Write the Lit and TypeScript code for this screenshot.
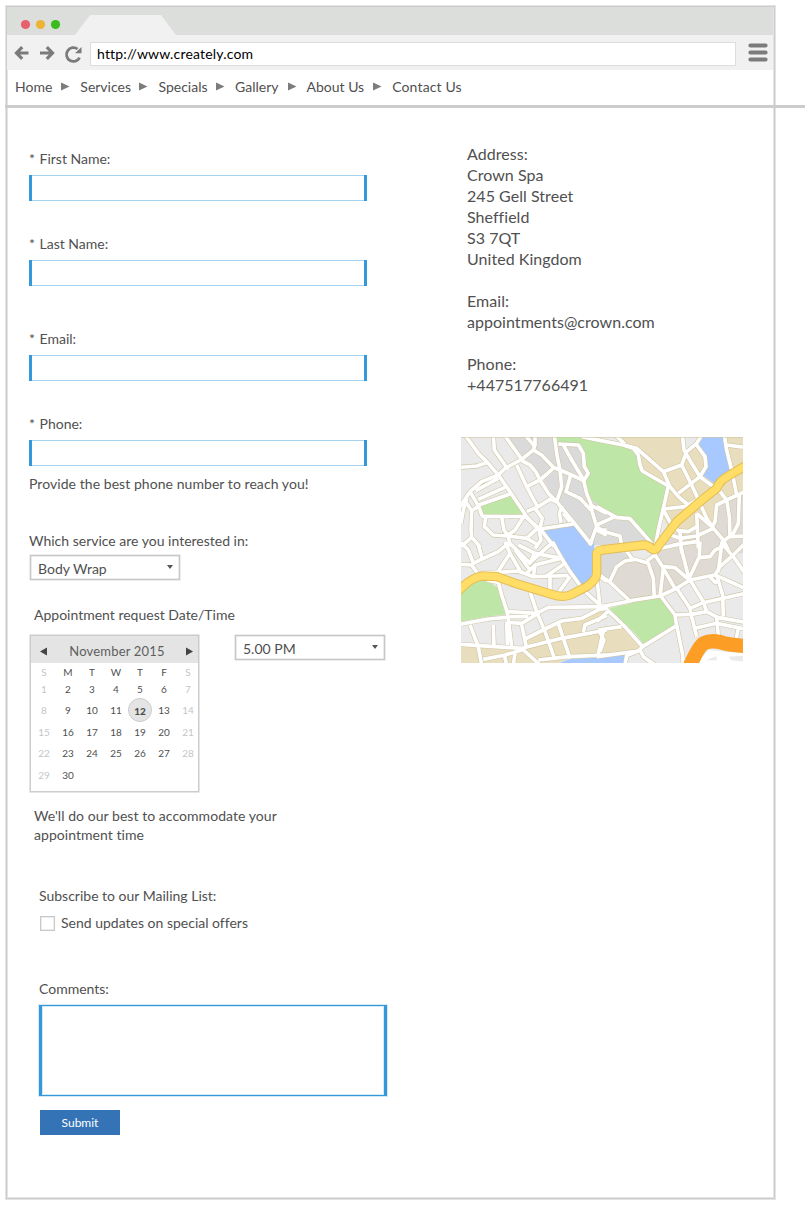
import { LitElement, html, svg, css } from "lit";
import { customElement } from "lit/decorators.js";

interface Tile { dx: number; dy: number; areas: [string, string][]; roads: string[]; }

const LIGHT = "#eaeaea", GREY = "#dadada", STONE = "#dfdad3", SAND = "#e8ddbd", PARK = "#bde6a7", WATER = "#a7c9ff";

/* The city map is split in four tiles, each with its own local coordinates. */
const tiles: Tile[] = [
  {
    dx: 0, dy: 0,
    areas: [
      [GREY, "145,21 305,21 315,40 450,60 450,345 400,345 345,270 305,215 265,150 215,90 155,30"],
      [SAND, "385,10 450,10 450,32"],
      [PARK, "303,21 310,36 375,40 390,60 392,115 403,132 386,155 405,205 450,238 450,35 390,21"],
      [PARK, "72,222 165,194 212,259 85,259"],
      [WATER, "263,300 358,285 412,345 415,348 296,348"],
    ],
    roads: [
      "30,15 70,70 100,100 130,135 165,185 215,260 250,300", "15,112 65,108 98,97",
      "115,15 118,60 150,105 160,118", "148,15 200,88 235,60 240,45 240,15", "235,60 260,75 295,112 315,120",
      "210,15 240,50", "315,120 305,70 298,15", "200,88 150,115 130,135 80,155 45,185 15,230",
      "200,92 225,105 242,125 258,155 280,190 305,215 350,270 410,345", "185,105 215,170 250,235", "215,170 255,150 295,115",
      "305,215 320,170 315,120", "310,42 370,45 385,70 388,110 400,130 386,152 350,135 315,120", "325,45 350,90 386,150",
      "386,152 395,190 407,220 410,240 425,290 440,300 455,300", "347,135 333,185 375,205 407,240", "407,225 435,240 455,250",
      "215,245 250,230 285,208 305,215", "45,185 69,226 165,192", "70,226 82,259", "62,182 130,145", "70,208 150,172",
      "80,259 210,260 255,297 355,282", "92,262 88,290 115,315 155,318 180,300 205,262", "140,262 147,300 160,318 165,350",
      "50,240 48,300 50,322 75,350", "50,322 18,350", "18,280 25,240 35,205", "68,230 50,242 32,215",
      "255,295 262,265 240,235", "318,278 313,250 322,228", "345,275 325,250", "160,318 215,325 250,345",
      "215,325 250,292", "252,300 258,330 240,355", "258,300 297,350", "425,290 412,325 405,345", "425,300 455,315",
    ],
  },
  {
    dx: 435, dy: 0,
    areas: [
      [SAND, "50,15 435,15 435,180 350,220 345,290 290,300 210,305 180,240 205,170 125,125 115,60 70,40"],
      [GREY, "-10,230 45,255 100,270 155,345 -10,345"],
      [STONE, "345,225 435,180 435,370 190,360 200,310 290,305 295,255 340,285"],
      [LIGHT, "250,15 300,15 288,45 255,60"],
      [LIGHT, "10,15 45,15 60,38 0,28"],
      [PARK, "-5,35 70,48 100,60 120,90 125,125 205,170 185,240 170,300 165,352 100,275 45,262 -5,230"],
      [WATER, "300,15 375,15 378,60 395,115 345,162 308,135 320,90 293,45"],
    ],
    roads: [
      "-55,20 0,31 70,45 110,55 190,125 210,170 235,200 265,225", "45,15 75,42", "70,45 100,55 115,75 120,105 127,123 205,168",
      "190,125 245,105 260,65 290,40 305,15", "245,105 275,165 300,220 320,265 340,295 370,330 385,360",
      "247,15 252,60 275,100 300,140 360,185 380,210 435,185", "290,45 315,80 318,110 300,140 235,190",
      "373,15 380,60 395,120 410,195", "380,45 435,52", "205,168 190,235 175,300 166,350", "190,237 255,230 290,210",
      "190,240 215,285 235,302 265,305 290,290", "380,210 388,260 390,320 435,318", "380,210 350,225 345,275 335,292",
      "418,190 415,280 400,310 375,330", "290,250 295,355", "290,250 335,290", "240,305 245,370",
      "195,308 240,325 290,318 340,295", "220,345 290,335", "370,325 360,360", "-10,230 45,260 -10,285",
      "45,262 90,266 120,300 155,340", "-5,300 60,318 65,345",
    ],
  },
  {
    dx: 0, dy: 345,
    areas: [
      [SAND, "15,303 200,310 215,285 270,260 320,235 380,225 430,190 455,187 455,340 340,340 310,356 15,356"],
      [LIGHT, "385,268 392,240 455,212 455,250"],
      [PARK, "15,145 65,110 95,105 130,130 150,208 95,215 15,230"],
      [WATER, "292,-5 418,-5 412,85 412,105 385,137"],
      [WATER, "310,356 340,343 455,335 455,356"],
    ],
    roads: [
      "15,58 50,60 68,85", "20,-5 40,15 55,55 75,45 130,20 160,-5", "70,0 82,42", "15,5 20,-10",
      "80,82 130,82 190,78 235,95 300,93 340,92", "128,82 165,25 150,-10", "165,25 200,85", "180,15 225,75",
      "160,-10 180,10 225,55 240,20", "225,52 290,-5", "190,0 240,25 320,40", "215,85 240,60 320,40", "240,62 235,95",
      "285,95 285,140", "275,93 330,55", "320,40 292,-10", "320,40 345,80 385,135 440,185", "345,95 305,150",
      "95,105 130,112 140,150 158,205 162,240 170,305", "160,200 245,205 280,187 455,185", "225,140 245,200 270,260 300,345",
      "15,238 100,222 155,217 160,210", "410,105 430,90 455,110", "425,95 435,185", "45,240 70,305 80,360", "115,240 117,300",
      "160,232 200,235 250,205", "15,298 200,310 320,280 455,255", "200,240 215,310", "155,230 157,300",
      "200,310 255,360", "200,315 150,330 85,343", "148,330 155,360", "180,325 175,360", "210,282 270,252 320,228 380,220 445,187",
      "310,235 345,340", "250,345 340,335 455,330", "385,262 390,240 455,212", "445,258 428,335", "165,215 220,215",
    ],
  },
  {
    dx: 435, dy: 345,
    areas: [
      [GREY, "-10,25 60,18 95,40 60,55 30,100 -10,85"],
      [STONE, "35,102 55,60 100,45 150,60 165,150 90,165"],
      [STONE, "150,40 170,10 435,-10 400,35 350,88 270,105 185,150 170,150"],
      [SAND, "0,255 75,245 128,300 115,312 -10,330"],
      [SAND, "-10,185 20,190 -10,215"],
      [PARK, "28,190 180,155 225,215 223,242 132,298 110,270"],
      [WATER, "-10,340 80,325 70,356 -10,356"],
      ["#ffffff", "290,356 325,315 435,325 435,356"],
      [LIGHT, "318,346 348,334 352,346"],
      [LIGHT, "385,335 435,332 435,350 395,346"],
    ],
    roads: [
      "-5,88 30,112 90,168 -5,187", "85,168 180,153 230,130 270,105 345,90 360,65 400,30 435,-5",
      "345,90 435,130", "330,95 345,112 360,110", "30,108 50,65 75,48 105,43 145,55 160,100 163,158", "100,45 75,12", "140,48 165,30 190,68 180,155",
      "165,35 165,10", "190,65 225,68 268,105", "190,70 225,130", "240,-5 268,105", "300,-10 298,35 265,105",
      "298,38 330,35 345,15 362,8", "180,10 240,-3", "400,35 365,-5", "400,35 435,85", "355,80 365,0",
      "180,150 225,210 230,242 128,305 70,240 25,198 -10,230", "25,190 -10,193", "230,130 270,190 275,215 290,275",
      "225,210 275,208", "270,190 310,173 435,145", "270,105 310,170 320,200 355,218 435,232", "350,90 368,150 370,215",
      "275,208 320,200", "350,215 355,275", "285,250 350,235 435,252", "230,240 248,330 250,360", "128,305 115,318 -10,335",
      "115,318 80,332 75,360", "120,315 130,335 165,360", "-5,255 65,245", "0,262 12,285 0,320", "415,250 408,285",
    ],
  },
];

const YELLOW = "M0,492 L18,475 Q50,443 80,438 L125,440 190,463 290,493 Q325,505 350,493 L395,470 Q425,450 425,430 L425,372 Q426,362 440,360 L565,345 Q580,345 588,355 Q602,366 612,345 L665,275 735,215 785,175 Q795,150 820,138 L870,108";

@customElement("city-map")
class CityMap extends LitElement {
  static styles = css`
    :host { display: block; width: 282px; height: 226px; }
    svg { display: block; }
    .casing { fill: none; stroke: #cfc6a6; stroke-width: 14.5; stroke-linejoin: round; }
    .road { fill: none; stroke: #fff; stroke-width: 11; stroke-linejoin: round; }
    .main-casing { fill: none; stroke: #e2be55; stroke-width: 28; }
    .main { fill: none; stroke: #ffdd66; stroke-width: 22; }
    .motorway { fill: none; stroke: #fc9e26; stroke-width: 43; }
  `;
  private layer(cls: string) {
    return tiles.map(t => svg`<g transform="translate(${t.dx} ${t.dy})">${t.roads.map(r => svg`<polyline class=${cls} points=${r}></polyline>`)}</g>`);
  }
  render() {
    return html`<svg width="282" height="226" viewBox="18 21 846 678" preserveAspectRatio="none">
      <rect x="0" y="0" width="900" height="720" fill=${LIGHT}></rect>
      ${tiles.map(t => svg`<g transform="translate(${t.dx} ${t.dy})">${t.areas.map(a => svg`<polygon fill=${a[0]} points=${a[1]}></polygon>`)}</g>`)}
      ${this.layer("casing")}${this.layer("road")}
      <path class="main-casing" d=${YELLOW}></path><path class="main" d=${YELLOW}></path>
      <path class="motorway" d="M704,710 Q730,650 746,640 Q765,630 795,636 Q820,645 870,648"></path>
      <rect x="18" y="21" width="846" height="2.5" fill="#cdc4a2" opacity="0.7"></rect>
    </svg>`;
  }
}

@customElement("month-calendar")
class MonthCalendar extends LitElement {
  static styles = css`
    :host { display: block; box-sizing: border-box; width: 169px; height: 157px; border: 1.5px solid #ccc; box-shadow: 0 0 0 0.5px #ccc; background: #fff; }
    .head { display: flex; align-items: center; justify-content: space-between; height: 27px; padding: 3px 5px 0 9px; box-sizing: border-box; background: #e4e4e4; color: #5e5e5e; font-size: 13px; }
    .title { letter-spacing: 0.17px; padding-left: 1px; }
    .grid { display: grid; grid-template-columns: repeat(7, 24px); grid-template-rows: 17px 17px 26px 17px 26px 18px; align-items: center; justify-items: center; width: 168px; margin-left: 1px; padding-top: 0; font-size: 10px; color: #4f4f4f; }
    .grid span { position: relative; }
    .off { color: #c6c6c6; }
    .picked { width: 22px; height: 22px; line-height: 24px; text-align: center; border: 1px solid #ccc; border-radius: 50%; background: #e4e4e4; font-weight: 900; }
  `;
  render() {
    const cells = ["S", "M", "T", "W", "T", "F", "S", ...Array.from({ length: 30 }, (_, i) => String(i + 1))];
    return html`<div class="head">
        <svg width="7" height="9" viewBox="0 0 7 9"><path d="M7 0.5V8.5L0 4.5Z" fill="#444"></path></svg>
        <span class="title">November 2015</span>
        <svg width="7" height="9" viewBox="0 0 7 9"><path d="M0 0.5V8.5L7 4.5Z" fill="#444"></path></svg>
      </div>
      <div class="grid">${cells.map((c, i) => html`<span class=${c === "12" ? "picked" : i % 7 === 0 || i % 7 === 6 ? "off" : ""}>${c}</span>`)}</div>`;
  }
}

@customElement("app-root")
class AppRoot extends LitElement {
  static styles = css`
    :host { display: flow-root; width: 810px; height: 1205px; overflow: hidden; background: #fff; font: 14px/20px Lato, sans-serif; color: #505050; font-variant-ligatures: none; }
    .window { box-sizing: border-box; width: 769px; height: 1193px; margin: 6px; border: 1px solid #ccc; box-shadow: 0 0 0 1px #e4e4e4, inset 0 0 0 1px #e4e4e4; }
    .tabs { display: flex; align-items: center; height: 28px; margin-right: 1px; background: #dcdedb; }
    .toolbar { display: flex; align-items: center; height: 35px; margin-right: 1px; background: #f1f1f1; }
    .arrows { margin-left: 7px; }
    .url { box-sizing: border-box; width: 646px; height: 24px; margin: 2px 0 0 7px; padding-left: 6px; border: 1px solid #ddd; background: #fff; color: #000; line-height: 21px; letter-spacing: 0.18px; }
    .menu { margin-left: 12px; }
    nav { display: flex; align-items: center; height: 33px; padding: 0 0 2px 8px; }
    nav svg { margin: 0 10px 0 9px; }
    nav span:nth-of-type(2), nav span:nth-of-type(3) { margin-right: -0.5px; }
    nav span:last-child { letter-spacing: 0.15px; }
    .rule { width: 800px; height: 3px; margin-left: -2px; background: #ccc; position: relative; }
    .content { display: flex; padding-left: 22px; }
    .form { width: 438px; padding-top: 41px; }
    .label { height: 20px; white-space: nowrap; }
    .star { margin-right: 1px; }
    .field { box-sizing: border-box; width: 338px; height: 26px; margin: 6px 0 33px; border: solid #3498db; border-width: 0 3px; box-shadow: inset 0 1px #a6d3f0, inset 0 -1px #a6d3f0; }
    .field.wide { margin-bottom: 43px; }
    .field.last { margin-bottom: 8px; }
    .help { margin-bottom: 37px; }
    .select { display: flex; align-items: center; justify-content: space-between; box-sizing: border-box; width: 150px; height: 25px; padding: 3px 6px 0 7px; border: 1px solid #c8c8c8; box-shadow: inset 0 0 0 0.5px #d8d8d8, 0 0 0 0.5px #d8d8d8; }
    .select svg { margin-top: -5px; }
    .service { margin: 4px 0 25px 1px; }
    .when { display: flex; gap: 36px; margin: 10px 0 14px 1px; }
    .note { line-height: 19px; margin: 0 0 42px 5px; }
    .indent { margin-left: 5px; }
    .inset { margin-left: 10px; }
    .check { display: flex; align-items: center; gap: 6px; margin: 7px 0 46px 11px; }
    .box { box-sizing: border-box; width: 15px; height: 15px; border: 1.5px solid #c8c8c8; box-shadow: inset 0 0 0 0.5px #ddd; }
    .comments { box-sizing: border-box; width: 348px; height: 91px; margin: 6px 0 14px 10px; border: solid #3498db; border-width: 1px 3px; box-shadow: 0 0 0 1px #d3e9f7, inset 0 0 0 1px #d3e9f7; }
    .submit { width: 80px; height: 25px; margin-left: 11px; background: #3573b7; color: #fff; font-size: 12px; line-height: 26px; text-align: center; }
    .side { padding-top: 35px; }
    .address { font-size: 16px; line-height: 21px; white-space: pre; letter-spacing: 0.04px; }
    city-map { margin: 42px 0 0 -6px; }
    .fit { letter-spacing: 0.06px; }
    .note.fit { letter-spacing: 0.05px; }
  `;
  private arrow() {
    return svg`<svg width="9" height="9" viewBox="0 0 9 9"><path d="M0 0.5V8.5L8.5 4.5Z" fill="#7c7c7c"></path></svg>`;
  }
  private select(text: string, cls = "") {
    return html`<div class="select ${cls}"><span>${text}</span><svg width="6" height="4" viewBox="0 0 6 4"><path d="M0 0H6L3 4Z" fill="#555"></path></svg></div>`;
  }
  private field(name: string, cls = "") {
    return html`<div class="label"><span class="star">*</span> ${name}</div><div class="field ${cls}"></div>`;
  }
  render() {
    const links = ["Home", "Services", "Specials", "Gallery", "About Us", "Contact Us"];
    return html`<div class="window">
      <div class="tabs"><svg width="180" height="28" viewBox="7 7 180 28">
        <path d="M75 35L90 15H161L176 35Z" fill="#f1f1f1"></path>
        <circle cx="25.5" cy="24.5" r="4.6" fill="#e9606d"></circle><circle cx="40.5" cy="24.5" r="4.6" fill="#ecb435"></circle><circle cx="55.5" cy="24.5" r="4.6" fill="#3bbb1c"></circle>
      </svg></div>
      <div class="toolbar">
        <svg class="arrows" width="69" height="24" viewBox="14 41 69 24" fill="none" stroke="#7b7b7b" stroke-width="3">
          <path d="M28.5 53H17M22.2 47.2L16.5 53L22.2 58.8" stroke-width="3.2"></path>
          <path d="M40 53H52M46.8 47.2L52.5 53L46.8 58.8" stroke-width="3.2"></path>
          <path d="M77.6 49A6.9 6.9 0 1 0 79.6 57.6" stroke-width="2.8"></path>
          <path d="M81.5 47V53.2H75Z" fill="#7b7b7b" stroke="none"></path>
        </svg>
        <div class="url">http://www.creately.com</div>
        <svg class="menu" width="20" height="20" viewBox="0 0 20 20" stroke="#7b7b7b" stroke-width="4" stroke-linecap="round"><path d="M2.4 2.5H17.6M2.4 9.5H17.6M2.4 16.5H17.6"></path></svg>
      </div>
      <nav>${links.map((l, i) => html`${i ? this.arrow() : ""}<span>${l}</span>`)}</nav>
      <div class="rule"></div>
      <div class="content">
        <div class="form">
          ${this.field("First Name:")}
          ${this.field("Last Name:", "wide")}
          ${this.field("Email:")}
          ${this.field("Phone:", "last")}
          <div class="label help fit">Provide the best phone number to reach you!</div>
          <div class="label">Which service are you interested in:</div>
          ${this.select("Body Wrap", "service")}
          <div class="label indent">Appointment request Date/Time</div>
          <div class="when"><month-calendar></month-calendar>${this.select("5.00 PM")}</div>
          <div class="note fit">We'll do our best to accommodate your<br>appointment time</div>
          <div class="label inset">Subscribe to our Mailing List:</div>
          <div class="check"><span class="box"></span><span>Send updates on special offers</span></div>
          <div class="label inset">Comments:</div>
          <div class="comments"></div>
          <div class="submit">Submit</div>
        </div>
        <div class="side">
          <div class="address">${"Address:\nCrown Spa\n245 Gell Street\nSheffield\nS3 7QT\nUnited Kingdom\n\nEmail:\nappointments@crown.com\n\nPhone:\n+447517766491"}</div>
          <city-map></city-map>
        </div>
      </div>
    </div>`;
  }
}
